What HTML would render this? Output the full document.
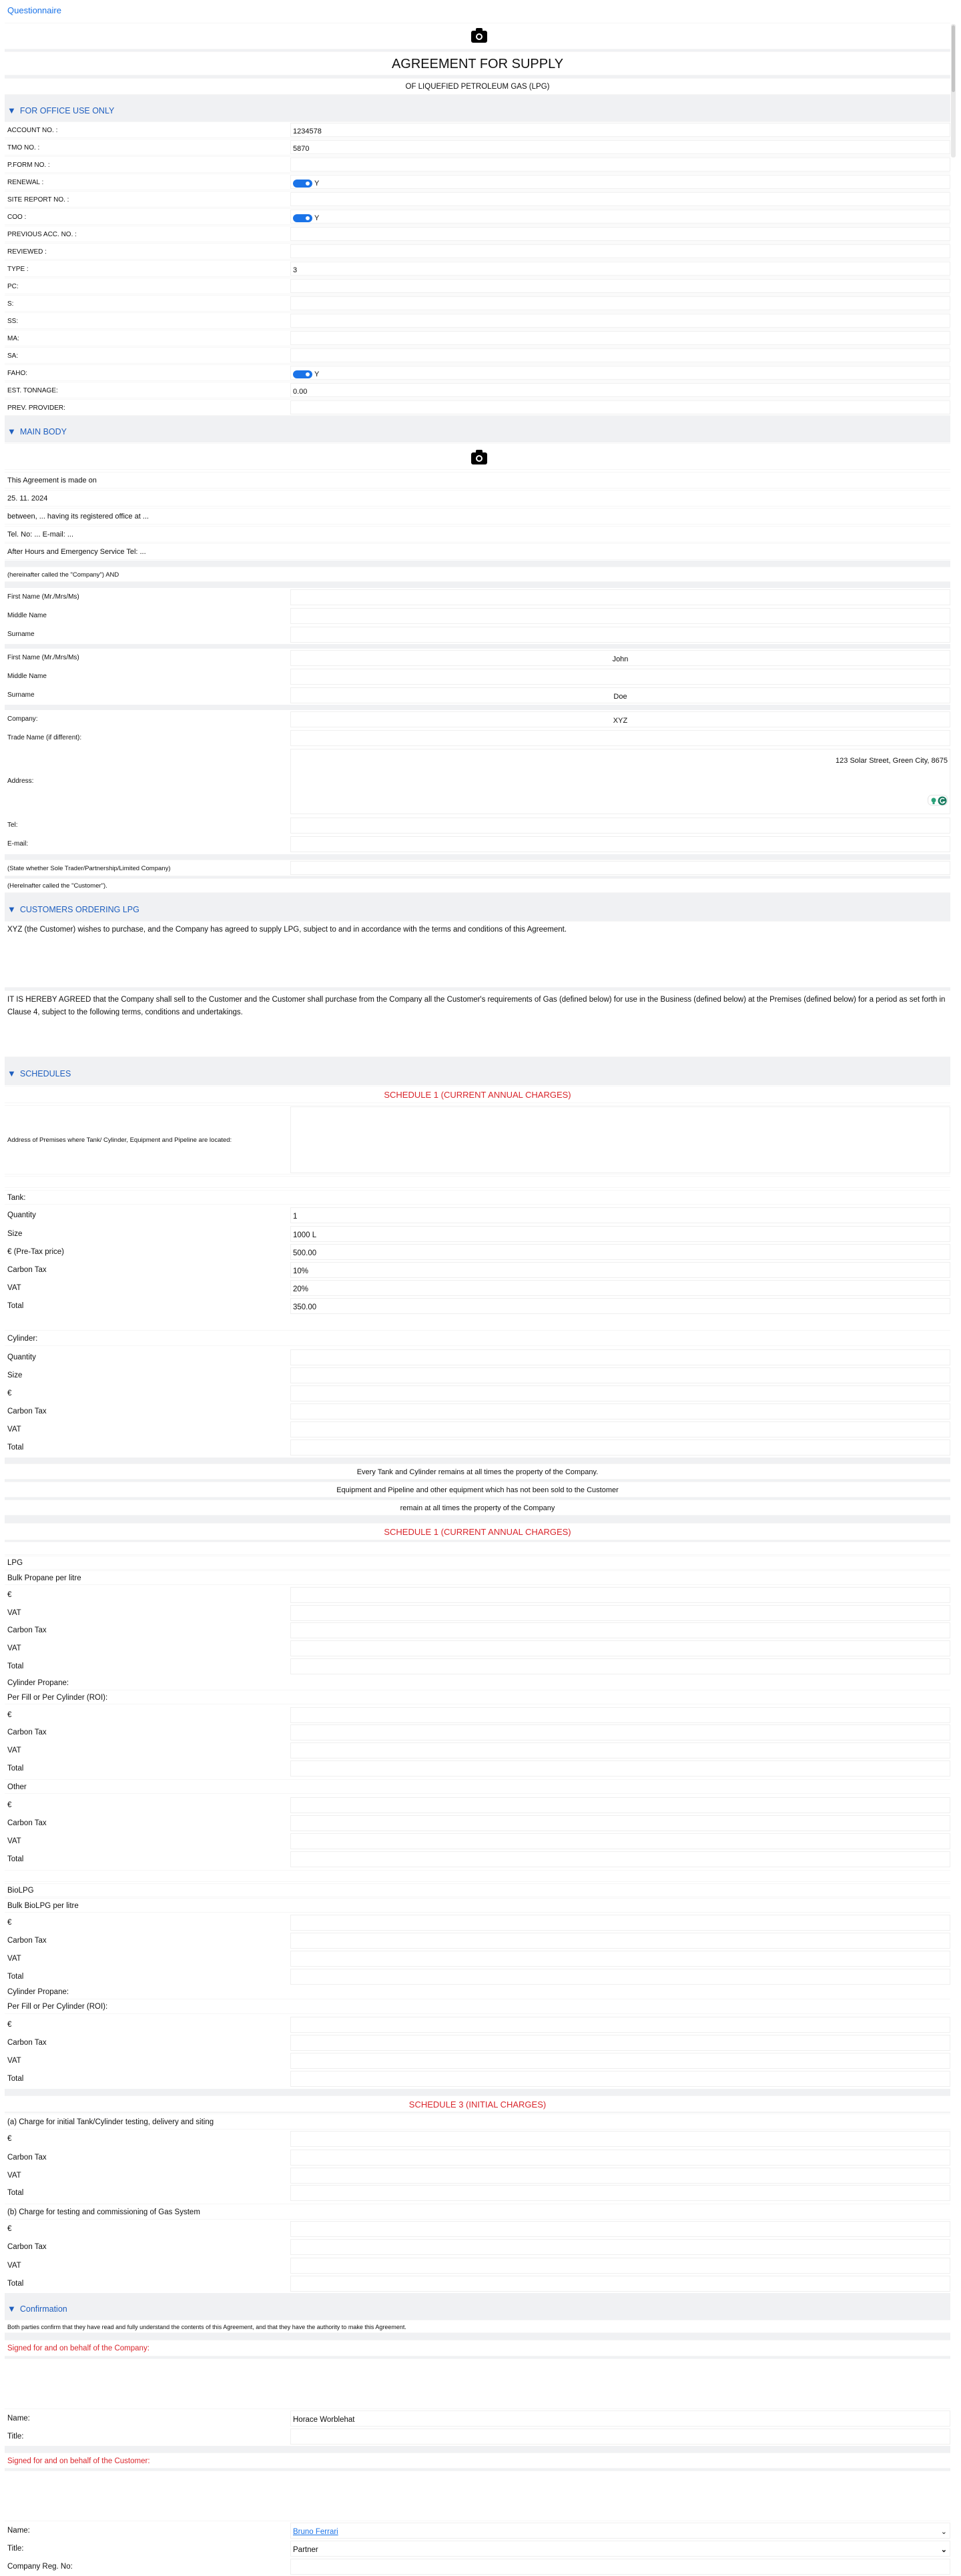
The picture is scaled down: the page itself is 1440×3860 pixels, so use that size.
<!DOCTYPE html>
<html><head><meta charset="utf-8">
<style>
*{margin:0;padding:0;box-sizing:border-box}
html,body{width:1440px;height:3860px;background:#fff;font-family:"Liberation Sans",Arial,sans-serif;color:#111;overflow:hidden}
#top{position:absolute;left:11px;top:8px;font-size:13px;color:#1a73e8}
#panel{position:absolute;left:7px;top:34px;width:1417px;height:3826px;background:#f0f1f3}
.w{position:absolute;left:7px;width:1417px;background:#fff}
.p{position:absolute;left:7px;width:1417px;background:#fff;padding-left:4px;white-space:nowrap;border-top:1px solid #f6f6f6;border-bottom:1px solid #f6f6f6}
.b{position:absolute;left:428px;right:0;top:1px;bottom:1px;border:1px solid #efefef;background:#fff;padding-left:3px;font-style:normal}
.o{font-size:10px}
.o .b{font-size:11px}
.m{font-size:11px}
.s{font-size:11.5px}
.c{text-align:center;padding-left:0}
.cv{text-align:center;padding-left:0}
.h{position:absolute;left:11px;font-size:12.5px;color:#1f5fbf}
.h span{font-size:13px;margin-right:6px}
.red{color:#d9262c}
.tg{display:inline-block;width:29px;height:12px;border-radius:6px;background:#1a73e8;position:relative;vertical-align:middle;margin:0 3px 0 0}
.tg:after{content:"";position:absolute;right:4px;top:3px;width:6px;height:6px;border-radius:50%;background:#fff}
.chev{position:absolute;right:4px;top:0;font-size:11px}
</style></head><body>
<div id="top">Questionnaire</div>
<div id="panel"></div>
<div style="position:absolute;left:1425px;top:36px;width:7px;height:200px;background:#e8e8e8;border-radius:3px"></div>
<div style="position:absolute;left:1426px;top:38px;width:5px;height:100px;background:#c4c4c4;border-radius:3px"></div>

<div class="p" style="top:34px;height:40px"><svg style="position:absolute;left:698px;top:6px" width="26" height="24" viewBox="0 0 26 24"><rect x="1" y="5" width="24" height="18" rx="3" fill="#000"/><rect x="8" y="1" width="10" height="6" rx="2" fill="#000"/><circle cx="13" cy="14" r="5" fill="#fff"/><circle cx="13" cy="14" r="3" fill="#000"/></svg></div>
<div class="p c" style="top:77px;height:36px;line-height:36px;font-size:20px">AGREEMENT FOR SUPPLY</div>
<div class="p c" style="top:117px;height:25px;line-height:25px;font-size:11.5px">OF LIQUEFIED PETROLEUM GAS (LPG)</div>

<div class="h" style="top:158px"><span>▼</span>FOR OFFICE USE ONLY</div>
<div class="w" style="top:182px;height:441px"></div>
<div class="p o" style="top:182px;height:25px;line-height:25px">ACCOUNT NO. :<i class="b">1234578</i></div>
<div class="p o" style="top:208px;height:25px;line-height:25px">TMO NO. :<i class="b">5870</i></div>
<div class="p o" style="top:234px;height:25px;line-height:25px">P.FORM NO. :<i class="b"></i></div>
<div class="p o" style="top:260px;height:25px;line-height:25px">RENEWAL :<i class="b"><span class="tg"></span>Y</i></div>
<div class="p o" style="top:286px;height:25px;line-height:25px">SITE REPORT NO. :<i class="b"></i></div>
<div class="p o" style="top:312px;height:25px;line-height:25px">COO :<i class="b"><span class="tg"></span>Y</i></div>
<div class="p o" style="top:338px;height:25px;line-height:25px">PREVIOUS ACC. NO. :<i class="b"></i></div>
<div class="p o" style="top:364px;height:25px;line-height:25px">REVIEWED :<i class="b"></i></div>
<div class="p o" style="top:390px;height:25px;line-height:25px">TYPE :<i class="b">3</i></div>
<div class="p o" style="top:416px;height:25px;line-height:25px">PC:<i class="b"></i></div>
<div class="p o" style="top:442px;height:25px;line-height:25px">S:<i class="b"></i></div>
<div class="p o" style="top:468px;height:25px;line-height:25px">SS:<i class="b"></i></div>
<div class="p o" style="top:494px;height:25px;line-height:25px">MA:<i class="b"></i></div>
<div class="p o" style="top:520px;height:25px;line-height:25px">SA:<i class="b"></i></div>
<div class="p o" style="top:546px;height:25px;line-height:25px">FAHO:<i class="b"><span class="tg"></span>Y</i></div>
<div class="p o" style="top:572px;height:25px;line-height:25px">EST. TONNAGE:<i class="b">0.00</i></div>
<div class="p o" style="top:598px;height:25px;line-height:25px">PREV. PROVIDER:<i class="b"></i></div>

<div class="h" style="top:639px"><span>▼</span>MAIN BODY</div>
<div class="w" style="top:663px;height:177px"></div>
<div class="p" style="top:664px;height:40px"><svg style="position:absolute;left:698px;top:8px" width="26" height="24" viewBox="0 0 26 24"><rect x="1" y="5" width="24" height="18" rx="3" fill="#000"/><rect x="8" y="1" width="10" height="6" rx="2" fill="#000"/><circle cx="13" cy="14" r="5" fill="#fff"/><circle cx="13" cy="14" r="3" fill="#000"/></svg></div>
<div class="p m" style="top:707px;height:25px;line-height:25px">This Agreement is made on</div>
<div class="p m" style="top:734px;height:25px;line-height:25px">25. 11. 2024</div>
<div class="p m" style="top:761px;height:25px;line-height:25px">between, ... having its registered office at ...</div>
<div class="p m" style="top:788px;height:25px;line-height:25px">Tel. No: ... E-mail: ...</div>
<div class="p m" style="top:814px;height:25px;line-height:25px">After Hours and Emergency Service Tel: ...</div>
<div class="p" style="top:849px;height:23px;line-height:23px;font-size:9.5px">(hereinafter called the "Company") AND</div>

<div class="p" style="top:881px;height:84px;border:0"></div>
<div class="p" style="top:882px;height:26px;line-height:26px;font-size:10px;border:0">First Name (Mr./Mrs/Ms)<i class="b"></i></div>
<div class="p" style="top:910px;height:26px;line-height:26px;font-size:10px;border:0">Middle Name<i class="b"></i></div>
<div class="p" style="top:938px;height:26px;line-height:26px;font-size:10px;border:0">Surname<i class="b"></i></div>

<div class="p" style="top:972px;height:84px;border:0"></div>
<div class="p" style="top:973px;height:26px;line-height:26px;font-size:10px;border:0">First Name (Mr./Mrs/Ms)<i class="b cv" style="font-size:11px">John</i></div>
<div class="p" style="top:1001px;height:26px;line-height:26px;font-size:10px;border:0">Middle Name<i class="b"></i></div>
<div class="p" style="top:1029px;height:26px;line-height:26px;font-size:10px;border:0">Surname<i class="b cv" style="font-size:11px">Doe</i></div>

<div class="p" style="top:1064px;height:216px;border:0"></div>
<div class="p" style="top:1065px;height:26px;line-height:26px;font-size:10px;border:0">Company:<i class="b cv" style="font-size:11px">XYZ</i></div>
<div class="p" style="top:1093px;height:26px;line-height:26px;font-size:10px;border:0">Trade Name (if different):<i class="b"></i></div>
<div class="p" style="top:1121px;height:100px;line-height:100px;font-size:10px;border:0">Address:<i class="b" style="line-height:14px;text-align:right;padding:10px 3px 0 0;font-size:11px">123 Solar Street, Green City, 8675
<span style="position:absolute;right:3px;bottom:12px;width:30px;height:16px;border:1px solid #e5e5e5;border-radius:6px;background:#fff"><svg width="30" height="16" viewBox="0 0 30 16"><circle cx="8" cy="7" r="3.5" fill="#2aa37a"/><rect x="6.5" y="10" width="3" height="3" fill="#2aa37a"/><circle cx="21" cy="8" r="6.5" fill="#157a5e"/><path d="M24 5.5a3.5 3.5 0 1 0 0.5 4h-3" stroke="#fff" stroke-width="1.5" fill="none"/></svg></span></i></div>
<div class="p" style="top:1224px;height:26px;line-height:26px;font-size:10px;border:0">Tel:<i class="b"></i></div>
<div class="p" style="top:1252px;height:26px;line-height:26px;font-size:10px;border:0">E-mail:<i class="b"></i></div>
<div class="p" style="top:1288px;height:25px;line-height:25px;font-size:9.5px">(State whether Sole Trader/Partnership/Limited Company)<i class="b"></i></div>
<div class="p" style="top:1316px;height:22px;line-height:22px;font-size:9.5px">(Herelnafter called the "Customer").</div>

<div class="h" style="top:1355px"><span>▼</span>CUSTOMERS ORDERING LPG</div>
<div class="p s" style="top:1380px;height:100px;padding-top:6px">XYZ (the Customer) wishes to purchase, and the Company has agreed to supply LPG, subject to and in accordance with the terms and conditions of this Agreement.</div>
<div class="p s" style="top:1484px;height:100px;padding-top:4px;line-height:19px;white-space:normal;padding-right:6px">IT IS HEREBY AGREED that the Company shall sell to the Customer and the Customer shall purchase from the Company all the Customer's requirements of Gas (defined below) for use in the Business (defined below) at the Premises (defined below) for a period as set forth in Clause 4, subject to the following terms, conditions and undertakings.</div>

<div class="h" style="top:1601px"><span>▼</span>SCHEDULES</div>
<div class="w" style="top:1626px;height:558px"></div>
<div class="p c red" style="top:1627px;height:26px;line-height:26px;font-size:13px">SCHEDULE 1 (CURRENT ANNUAL CHARGES)</div>
<div class="p" style="top:1656px;height:104px;line-height:104px;font-size:9.5px">Address of Premises where Tank/ Cylinder, Equipment and Pipeline are located:<i class="b"></i></div>
<div class="p" style="top:1762px;height:18px"></div>
<div class="p s" style="top:1783px;height:22px;line-height:22px">Tank:</div>
<div class="p s" style="top:1808px;height:26px;line-height:26px;border:0">Quantity<i class="b">1</i></div>
<div class="p s" style="top:1836px;height:26px;line-height:26px;border:0">Size<i class="b">1000 L</i></div>
<div class="p s" style="top:1863px;height:26px;line-height:26px;border:0">€ (Pre-Tax price)<i class="b">500.00</i></div>
<div class="p s" style="top:1890px;height:26px;line-height:26px;border:0">Carbon Tax<i class="b">10%</i></div>
<div class="p s" style="top:1917px;height:26px;line-height:26px;border:0">VAT<i class="b">20%</i></div>
<div class="p s" style="top:1944px;height:26px;line-height:26px;border:0">Total<i class="b">350.00</i></div>
<div class="p" style="top:1970px;height:20px;border:0"></div>
<div class="p s" style="top:1993px;height:24px;line-height:24px">Cylinder:</div>
<div class="p s" style="top:2020px;height:164px;border:0"></div>
<div class="p s" style="top:2021px;height:26px;line-height:26px;border:0">Quantity<i class="b"></i></div>
<div class="p s" style="top:2048px;height:26px;line-height:26px;border:0">Size<i class="b"></i></div>
<div class="p s" style="top:2075px;height:26px;line-height:26px;border:0">€<i class="b"></i></div>
<div class="p s" style="top:2102px;height:26px;line-height:26px;border:0">Carbon Tax<i class="b"></i></div>
<div class="p s" style="top:2129px;height:26px;line-height:26px;border:0">VAT<i class="b"></i></div>
<div class="p s" style="top:2156px;height:26px;line-height:26px;border:0">Total<i class="b"></i></div>

<div class="p c" style="top:2193px;height:24px;line-height:24px;font-size:11px">Every Tank and Cylinder remains at all times the property of the Company.</div>
<div class="p c" style="top:2220px;height:24px;line-height:24px;font-size:11px">Equipment and Pipeline and other equipment which has not been sold to the Customer</div>
<div class="p c" style="top:2247px;height:24px;line-height:24px;font-size:11px">remain at all times the property of the Company</div>

<div class="p c red" style="top:2282px;height:26px;line-height:26px;font-size:13px">SCHEDULE 1 (CURRENT ANNUAL CHARGES)</div>
<div class="p" style="top:2310px;height:820px;border:0"></div>
<div class="p" style="top:2310px;height:20px"></div>
<div class="p s" style="top:2331px;height:21px;line-height:21px">LPG</div>
<div class="p s" style="top:2353px;height:22px;line-height:22px">Bulk Propane per litre</div>
<div class="p s" style="top:2377px;height:26px;line-height:26px;border:0">€<i class="b"></i></div>
<div class="p s" style="top:2404px;height:26px;line-height:26px;border:0">VAT<i class="b"></i></div>
<div class="p s" style="top:2430px;height:26px;line-height:26px;border:0">Carbon Tax<i class="b"></i></div>
<div class="p s" style="top:2457px;height:26px;line-height:26px;border:0">VAT<i class="b"></i></div>
<div class="p s" style="top:2484px;height:26px;line-height:26px;border:0">Total<i class="b"></i></div>
<div class="p s" style="top:2512px;height:20px;line-height:20px;border:0">Cylinder Propane:</div>
<div class="p s" style="top:2532px;height:22px;line-height:22px">Per Fill or Per Cylinder (ROI):</div>
<div class="p s" style="top:2557px;height:26px;line-height:26px;border:0">€<i class="b"></i></div>
<div class="p s" style="top:2583px;height:26px;line-height:26px;border:0">Carbon Tax<i class="b"></i></div>
<div class="p s" style="top:2610px;height:26px;line-height:26px;border:0">VAT<i class="b"></i></div>
<div class="p s" style="top:2637px;height:26px;line-height:26px;border:0">Total<i class="b"></i></div>
<div class="p s" style="top:2666px;height:22px;line-height:22px">Other</div>
<div class="p s" style="top:2692px;height:26px;line-height:26px;border:0">€<i class="b"></i></div>
<div class="p s" style="top:2719px;height:26px;line-height:26px;border:0">Carbon Tax<i class="b"></i></div>
<div class="p s" style="top:2746px;height:26px;line-height:26px;border:0">VAT<i class="b"></i></div>
<div class="p s" style="top:2773px;height:26px;line-height:26px;border:0">Total<i class="b"></i></div>
<div class="p" style="top:2802px;height:18px"></div>
<div class="p s" style="top:2822px;height:21px;line-height:21px">BioLPG</div>
<div class="p s" style="top:2844px;height:22px;line-height:22px">Bulk BioLPG per litre</div>
<div class="p s" style="top:2868px;height:26px;line-height:26px;border:0">€<i class="b"></i></div>
<div class="p s" style="top:2895px;height:26px;line-height:26px;border:0">Carbon Tax<i class="b"></i></div>
<div class="p s" style="top:2922px;height:26px;line-height:26px;border:0">VAT<i class="b"></i></div>
<div class="p s" style="top:2949px;height:26px;line-height:26px;border:0">Total<i class="b"></i></div>
<div class="p s" style="top:2975px;height:20px;line-height:20px;border:0">Cylinder Propane:</div>
<div class="p s" style="top:2995px;height:23px;line-height:23px">Per Fill or Per Cylinder (ROI):</div>
<div class="p s" style="top:3021px;height:26px;line-height:26px;border:0">€<i class="b"></i></div>
<div class="p s" style="top:3048px;height:26px;line-height:26px;border:0">Carbon Tax<i class="b"></i></div>
<div class="p s" style="top:3075px;height:26px;line-height:26px;border:0">VAT<i class="b"></i></div>
<div class="p s" style="top:3102px;height:26px;line-height:26px;border:0">Total<i class="b"></i></div>

<div class="p c red" style="top:3140px;height:25px;line-height:25px;font-size:13px">SCHEDULE 3 (INITIAL CHARGES)</div>
<div class="p" style="top:3166px;height:270px;border:0"></div>
<div class="p s" style="top:3167px;height:24px;line-height:24px">(a) Charge for initial Tank/Cylinder testing, delivery and siting</div>
<div class="p s" style="top:3192px;height:26px;line-height:26px;border:0">€<i class="b"></i></div>
<div class="p s" style="top:3220px;height:26px;line-height:26px;border:0">Carbon Tax<i class="b"></i></div>
<div class="p s" style="top:3247px;height:26px;line-height:26px;border:0">VAT<i class="b"></i></div>
<div class="p s" style="top:3273px;height:26px;line-height:26px;border:0">Total<i class="b"></i></div>
<div class="p s" style="top:3302px;height:24px;line-height:24px">(b) Charge for testing and commissioning of Gas System</div>
<div class="p s" style="top:3327px;height:26px;line-height:26px;border:0">€<i class="b"></i></div>
<div class="p s" style="top:3354px;height:26px;line-height:26px;border:0">Carbon Tax<i class="b"></i></div>
<div class="p s" style="top:3382px;height:26px;line-height:26px;border:0">VAT<i class="b"></i></div>
<div class="p s" style="top:3409px;height:26px;line-height:26px;border:0">Total<i class="b"></i></div>

<div class="h" style="top:3452px"><span>▼</span>Confirmation</div>
<div class="p" style="top:3476px;height:20px;line-height:20px;font-size:9px">Both parties confirm that they have read and fully understand the contents of this Agreement, and that they have the authority to make this Agreement.</div>
<div class="p red" style="top:3506px;height:25px;line-height:25px;font-size:11.5px">Signed for and on behalf of the Company:</div>
<div class="p" style="top:3534px;height:76px"></div>
<div class="p" style="top:3610px;height:55px;border:0"></div>
<div class="p s" style="top:3611px;height:26px;line-height:26px;border:0">Name:<i class="b">Horace Worblehat</i></div>
<div class="p s" style="top:3638px;height:26px;line-height:26px;border:0">Title:<i class="b"></i></div>
<div class="p red" style="top:3675px;height:24px;line-height:24px;font-size:11.5px">Signed for and on behalf of the Customer:</div>
<div class="p" style="top:3702px;height:76px"></div>
<div class="p" style="top:3778px;height:82px;border:0"></div>
<div class="p s" style="top:3779px;height:26px;line-height:26px;border:0">Name:<i class="b"><span style="color:#1a73e8;text-decoration:underline">Bruno Ferrari</span><span class="chev">⌄</span></i></div>
<div class="p s" style="top:3806px;height:26px;line-height:26px;border:0">Title:<i class="b">Partner<span class="chev" style="font-weight:bold">&#8964;</span></i></div>
<div class="p s" style="top:3833px;height:26px;line-height:26px;border:0">Company Reg. No:<i class="b"></i></div>
</body></html>
